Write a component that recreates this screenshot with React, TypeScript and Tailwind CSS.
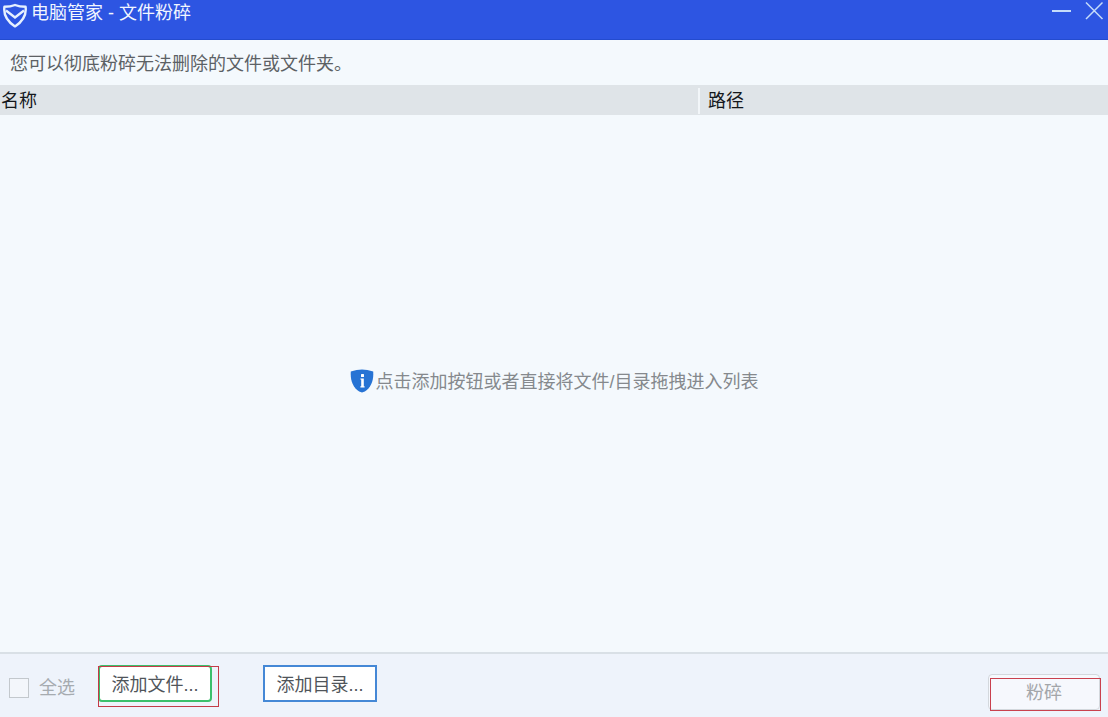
import { useState } from 'react'

const font = "font-['Liberation_Sans','Noto_Sans_CJK_SC',sans-serif]"

function Logo() {
  return (
    <svg width="26" height="28" viewBox="0 0 26 28" fill="none" stroke="#e6f0ff" strokeLinejoin="round" aria-hidden="true">
      <path d="M13 5C9.6 6.4 6 6.8 2.4 6.8C1.4 14.5 5.5 21.5 13 26.4C20.5 21.5 24.6 14.5 23.6 6.8C20 6.8 16.4 6.4 13 5Z" strokeWidth="2.4" />
      <path d="M4 10.5L13 17.4L22 10.5" strokeWidth="2.4" strokeLinejoin="miter" />
    </svg>
  )
}

function InfoShield() {
  return (
    <svg width="24" height="24" viewBox="0 0 24 24" aria-hidden="true">
      <path d="M12 0.4C8.8 0.5 4.6 1.2 0.8 2.6C0.2 11 2.6 18.2 9.2 22.6Q12 24.2 14.8 22.6C21.4 18.2 23.8 11 23.2 2.6C19.4 1.2 15.2 0.5 12 0.4Z" fill="#2673d4" />
      <rect x="11" y="5" width="3" height="3" rx="0.6" fill="#fff" />
      <path d="M10.4 9.6H13.8V17.2H14.6V18.4H10.4V17.2H11.2V10.6H10.4Z" fill="#fff" />
    </svg>
  )
}

export default function App() {
  const [all, setAll] = useState(false)

  return (
    <div className={`min-h-screen flex flex-col bg-[#f4f9fd] text-lg leading-[26px] ${font}`}>
      <header className="h-10 flex items-start justify-between bg-[#2d55e2] border-b border-[#234bcf] text-[#f2f6ff]">
        <div className="flex items-start pl-0.5 gap-[3px]">
          <Logo />
          <h1>电脑管家 - 文件粉碎</h1>
        </div>
        <div className="flex items-start gap-3 pr-1">
          <button type="button" aria-label="最小化" className="pt-px">
            <svg width="20" height="20" viewBox="0 0 20 20" stroke="#c5dcfa" strokeWidth="2">
              <path d="M0 10H19" />
            </svg>
          </button>
          <button type="button" aria-label="关闭" className="pt-px">
            <svg width="20" height="20" viewBox="0 0 20 20" stroke="#c5dcfa" strokeWidth="1.5">
              <path d="M2 1.5L18.5 18M18.5 1.5L2 18" />
            </svg>
          </button>
        </div>
      </header>

      <p className="px-2.5 pt-[11px] pb-2 text-[#5c6165]">您可以彻底粉碎无法删除的文件或文件夹。</p>

      <main className="flex-1 flex flex-col">
        <table className="w-full table-fixed bg-[#dfe4e8] text-[#14181c]">
          <thead>
            <tr className="h-[30px]">
              <th scope="col" className="w-[63%] pl-px pt-0.5 pb-0 text-left font-normal">名称</th>
              <th scope="col" className="pt-0.5 pb-0 text-left font-normal">
                <div className="border-l-2 border-[#f2f6f9] pl-2">路径</div>
              </th>
            </tr>
          </thead>
        </table>
        <div className="flex-1 flex items-center justify-center gap-0.5 pb-[6px] text-[#85898d]">
          <InfoShield />
          <span className="pt-0.5">点击添加按钮或者直接将文件/目录拖拽进入列表</span>
        </div>
      </main>

      <footer className="h-[65px] flex items-start justify-between border-t-2 border-[#d9e0e6] bg-[#eef3fb] pl-[9px] pr-2">
        <div className="flex items-start pt-[11px]">
          <label className="flex items-center gap-2.5 pt-2.5 text-[#a6abb0]">
            <input type="checkbox" checked={all} onChange={e => setAll(e.target.checked)}
              className="appearance-none size-5 border border-[#c3c8cd] bg-[#f3f6fb] checked:bg-[#2673d4]" />
            全选
          </label>
          <div className="relative ml-[23px]">
            <button type="button" className="w-[114px] h-[37px] pt-0.5 rounded-sm border-2 border-[#3cc06c] bg-white text-[#50555a]">添加文件...</button>
            <div className="absolute left-0 top-px w-[121px] h-[41px] border border-[#c43c48] pointer-events-none" />
          </div>
          <button type="button" className="ml-[51px] w-[114px] h-[37px] pt-0.5 border-2 border-[#4588d6] bg-white text-[#50555a]">添加目录...</button>
        </div>
        <div className="relative mt-5">
          <button type="button" disabled className="w-28 h-9 pt-0.5 rounded-sm border border-[#d3d8dd] bg-[#f6f8fd] text-[#a3a6aa]">粉碎</button>
          <div className="absolute left-0.5 top-1 w-[111px] h-[33px] border border-[#c9404e] pointer-events-none" />
        </div>
      </footer>
    </div>
  )
}
